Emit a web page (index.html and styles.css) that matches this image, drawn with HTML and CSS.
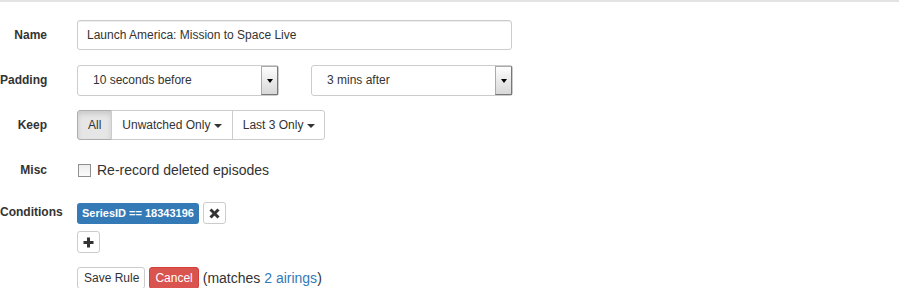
FILE: index.html
```html
<!DOCTYPE html>
<html lang="en">

<head>
    <meta charset="UTF-8">
    <link rel="stylesheet" href="styles.css">
</head>

<body>
    <div class="regla">
        <div class="fila">
            <label class="etiqueta">Name</label>
            <input type="text" class="campo nombre" value="Launch America: Mission to Space Live">
        </div>

        <div class="fila">
            <label class="etiqueta">Padding</label>
            <div class="selector ancho1">
                <span class="texto">10 seconds before</span>
                <span class="flecha"><i></i></span>
            </div>
            <div class="selector ancho2">
                <span class="texto">3 mins after</span>
                <span class="flecha"><i></i></span>
            </div>
        </div>

        <div class="fila">
            <label class="etiqueta">Keep</label>
            <div class="grupo">
                <button class="boton activo">All</button>
                <button class="boton">Unwatched Only <span class="caret"></span></button>
                <button class="boton">Last 3 Only <span class="caret"></span></button>
            </div>
        </div>

        <div class="fila misc">
            <label class="etiqueta">Misc</label>
            <label class="check"><span class="caja"></span>Re-record deleted episodes</label>
        </div>

        <div class="fila condiciones">
            <label class="etiqueta">Conditions</label>
            <div class="lista">
                <div class="condicion">
                    <span class="insignia">SeriesID == 18343196</span>
                    <button class="mini">
                        <svg width="11" height="11" viewBox="0 0 11 11"><path d="M1.5 1.5 L9.5 9.5 M9.5 1.5 L1.5 9.5" stroke="#333" stroke-width="3"/></svg>
                    </button>
                </div>
                <button class="mini">
                    <svg width="11" height="11" viewBox="0 0 11 11"><path d="M5.5 0.5 V10.5 M0.5 5.5 H10.5" stroke="#333" stroke-width="3"/></svg>
                </button>
            </div>
        </div>

        <div class="acciones">
            <button class="peque">Save Rule</button>
            <button class="peque rojo">Cancel</button>
            <span class="nota">(matches <a href="#">2 airings</a>)</span>
        </div>
    </div>
</body>

</html>
```

FILE: styles.css
```css
/*página general*/
body {
    margin: 0;
    font-family: "Liberation Sans", Arial, sans-serif;
    font-size: 14px;
    color: #333;
    background: white;
}

.regla {
    border-top: 2px solid #e3e3e3;
    padding-top: 18px;
}

/*filas del formulario*/
.fila {
    display: flex;
    align-items: center;
    margin-bottom: 15px;
    height: 30px;
}

.etiqueta {
    width: 47px;
    flex: none;
    margin-right: 30px;
    text-align: right;
    font-size: 12px;
    font-weight: bold;
    white-space: nowrap;
    color: #333;
}

/*campo de texto*/
.campo {
    box-sizing: border-box;
    height: 30px;
    border: 1px solid #ccc;
    border-radius: 3px;
    padding: 0 9px;
    font-family: inherit;
    font-size: 12px;
    color: #333;
    box-shadow: inset 0 1px 1px rgba(0, 0, 0, .075);
}

.nombre {
    width: 435px;
}

/*selects antiguos*/
.selector {
    box-sizing: border-box;
    height: 31px;
    border: 1px solid #ccc;
    border-radius: 3px;
    display: flex;
    align-items: stretch;
    font-size: 12px;
}

.ancho1 {
    width: 202px;
    margin-right: 32px;
}

.ancho2 {
    width: 202px;
}

.selector .texto {
    flex: 1;
    padding-left: 15px;
    display: flex;
    align-items: center;
}

.selector .flecha {
    width: 15px;
    border: 1px solid #777;
    border-top-color: #aaa;
    border-left-color: #aaa;
    background: linear-gradient(#fdfdfd, #d8d8d8);
    display: flex;
    align-items: center;
    justify-content: center;
}

.selector .flecha i {
    border-top: 4px solid #000;
    border-left: 3px solid transparent;
    border-right: 3px solid transparent;
    margin-top: 1px;
}

/*grupo de botones*/
.grupo {
    display: flex;
}

.boton {
    height: 30px;
    padding: 0 10px;
    border: 1px solid #ccc;
    background: white;
    font-family: inherit;
    font-size: 12px;
    color: #333;
    margin-left: -1px;
}

.boton:first-child {
    margin-left: 0;
    border-radius: 3px 0 0 3px;
}

.boton:last-child {
    padding-right: 9px;
    border-radius: 0 3px 3px 0;
}

.boton.activo {
    background: #e6e6e6;
    border-color: #adadad;
    box-shadow: inset 0 3px 5px rgba(0, 0, 0, .125);
}

.caret {
    display: inline-block;
    border-top: 4px solid #333;
    border-left: 4px solid transparent;
    border-right: 4px solid transparent;
    vertical-align: middle;
    margin-left: 0;
}

/*casilla*/
.check {
    display: flex;
    align-items: center;
    font-size: 14px;
    color: #333;
}

.caja {
    box-sizing: border-box;
    width: 13px;
    height: 13px;
    border: 1px solid #8f8f8f;
    background: linear-gradient(#ededed, #fbfbfb);
    margin: 0 6px 0 1px;
}

/*condiciones*/
.condiciones {
    height: auto;
    align-items: flex-start;
    margin-bottom: 14px;
}

.condiciones .etiqueta {
    padding-top: 5px;
}

.lista {
    display: flex;
    flex-direction: column;
    align-items: flex-start;
    padding-top: 2px;
}

.condicion {
    display: flex;
    align-items: center;
    margin-bottom: 7px;
}

.insignia {
    background: #337ab7;
    color: white;
    font-size: 11px;
    font-weight: bold;
    height: 21px;
    line-height: 21px;
    padding: 0 5px;
    border-radius: 3px;
    margin-right: 4px;
}

.mini {
    box-sizing: border-box;
    width: 23px;
    height: 22px;
    padding: 0;
    border: 1px solid #ccc;
    border-radius: 3px;
    background: white;
    display: flex;
    align-items: center;
    justify-content: center;
}

/*botones finales*/
.acciones {
    display: flex;
    align-items: center;
    padding-left: 77px;
}

.peque {
    height: 22px;
    padding: 0 5px 0 6px;
    border: 1px solid #ccc;
    border-radius: 3px;
    background: white;
    font-family: inherit;
    font-size: 12px;
    color: #333;
    margin-right: 4px;
}

.peque.rojo {
    background: #d9534f;
    border-color: #d43f3a;
    color: white;
    padding: 0 5px;
}

.nota {
    font-size: 14px;
    margin-left: 0;
}

.nota a {
    color: #337ab7;
    text-decoration: none;
}
```
